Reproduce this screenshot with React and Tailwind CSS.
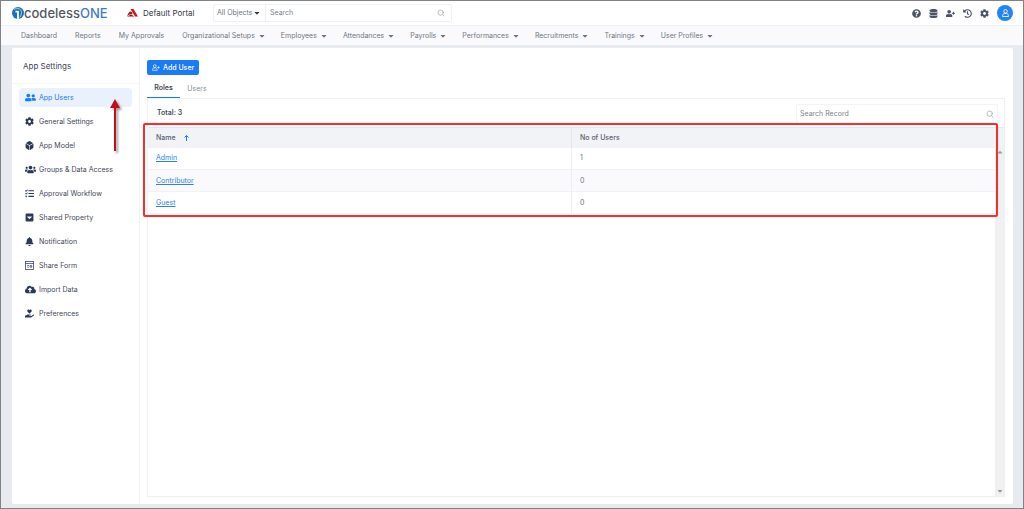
import {
  FaUserFriends, FaCog, FaDiceD6, FaUsers, FaTasks, FaCaretSquareDown, FaBell,
  FaCloudUploadAlt, FaHandHoldingHeart, FaQuestionCircle, FaDatabase, FaUserPlus,
  FaHistory, FaCaretDown, FaCaretUp,
} from 'react-icons/fa';
import { LuSearch } from 'react-icons/lu';

const navItems = [
  { label: 'Dashboard' },
  { label: 'Reports' },
  { label: 'My Approvals' },
  { label: 'Organizational Setups', menu: true },
  { label: 'Employees', menu: true },
  { label: 'Attendances', menu: true },
  { label: 'Payrolls', menu: true },
  { label: 'Performances', menu: true },
  { label: 'Recruitments', menu: true },
  { label: 'Trainings', menu: true },
  { label: 'User Profiles', menu: true },
];

const settings = [
  { label: 'App Users', icon: FaUserFriends, wide: true, active: true },
  { label: 'General Settings', icon: FaCog },
  { label: 'App Model', icon: FaDiceD6 },
  { label: 'Groups & Data Access', icon: FaUsers, wide: true },
  { label: 'Approval Workflow', icon: FaTasks },
  { label: 'Shared Property', icon: FaCaretSquareDown },
  { label: 'Notification', icon: FaBell },
  { label: 'Share Form', icon: FormIcon },
  { label: 'Import Data', icon: FaCloudUploadAlt, wide: true },
  { label: 'Preferences', icon: FaHandHoldingHeart },
];

const roles = [
  { name: 'Admin', users: 1 },
  { name: 'Contributor', users: 0 },
  { name: 'Guest', users: 0 },
];

const actions = [
  { label: 'Help', icon: FaQuestionCircle },
  { label: 'Data', icon: FaDatabase },
  { label: 'Invite user', icon: FaUserPlus },
  { label: 'History', icon: FaHistory },
  { label: 'Settings', icon: FaCog },
];

function FormIcon({ className }) {
  return (
    <svg viewBox="0 0 16 16" className={className} fill="none" stroke="currentColor" strokeWidth="1.3">
      <rect x="1" y="1" width="14" height="14" />
      <path d="M1 4.5h14M4 8h3M4 11h3M9 8h3v3H9z" />
    </svg>
  );
}

function PersonIcon({ className, plus }) {
  return (
    <svg viewBox={plus ? '0 0 20 16' : '0 0 14 16'} className={className} fill="none" stroke="currentColor" strokeWidth="1.7">
      <circle cx="7" cy="4.5" r="3.5" />
      <path d="M1 15c0-4 2-6 4-6h4c2 0 4 2 4 6z" />
      {plus && <path d="M16.500 5v6M13.500 8h6" />}
    </svg>
  );
}

function Logo() {
  return (
    <a href="#" className="flex items-center w-[95px] font-medium text-[13px] leading-4 whitespace-nowrap">
      <svg viewBox="0 0 24 24" className="w-3 h-3 shrink-0">
        <circle cx="12" cy="12" r="12" fill="#1a73b8" />
        <path d="M7 9h5v15" fill="none" stroke="#fff" strokeWidth="3.5" />
        <path d="M4 5c6-4 15-2 15 6 0 4-2 8-4 10" fill="none" stroke="#fff" strokeWidth="1.2" />
      </svg>
      <span className="text-[#54585f]">codeless<span className="text-[#3f78cf]">ONE</span></span>
    </a>
  );
}

function Header() {
  return (
    <header className="bg-white h-6 pl-[11px] pr-2.5 flex items-center shrink-0">
      <Logo />
      <div className="flex items-center gap-[5px] w-[106px] pl-5">
        <svg viewBox="0 0 22 16" className="w-[11px] h-2">
          <path d="M7 0h6l9 15h-6z" fill="#d0161b" />
          <path d="M6 5l4 1 1 4-6 1-5 3 3-6z" fill="#b01518" />
          <path d="M0 15l8-4 7 4z" fill="#8f1414" />
        </svg>
        <span className="text-[8px] text-[#343a40] whitespace-nowrap">Default Portal</span>
      </div>
      <form className="flex items-center w-[239px] h-[18px] border border-[#eff0f3] rounded-xs">
        <button type="button" className="flex items-center justify-between w-[52px] h-full pl-[3px] pr-1 border-r border-[#eff0f3] whitespace-nowrap">
          All Objects
          <FaCaretDown className="w-2 h-2 text-[#343a40]" />
        </button>
        <input aria-label="Search" placeholder="Search" className="flex-1 min-w-0 pl-1 outline-none placeholder:text-[#7d838d]" />
        <LuSearch className="w-2 h-2 mr-1.5 text-[#9aa0a8]" />
      </form>
      <div className="ml-auto flex items-center gap-2 text-[#4b5366]">
        {actions.map(({ label, icon: Icon }) => (
          <button key={label} aria-label={label}>
            <Icon className="w-[9px] h-[9px]" />
          </button>
        ))}
        <button aria-label="Account" className="w-4 h-4 rounded-full bg-[#2584f5] text-white flex items-center justify-center">
          <PersonIcon className="w-[7px] h-2" />
        </button>
      </div>
    </header>
  );
}

function NavBar() {
  return (
    <nav className="flex items-center h-5 px-5 bg-[#fafafc] border-t border-[#f0f1f4] shrink-0">
      {navItems.map((item) => (
        <a key={item.label} href="#" className={`flex items-center gap-1 whitespace-nowrap ${item.menu ? 'mr-4' : 'mr-[18px]'}`}>
          {item.label}
          {item.menu && <FaCaretDown className="w-1.5 h-2" />}
        </a>
      ))}
    </nav>
  );
}

function Sidebar() {
  return (
    <aside className="relative w-32 shrink-0 border-r border-[#f1f2f4] text-[#3f4757]">
      <h2 className="h-9 pl-[11px] flex items-center border-b border-[#f6f6f8] text-[8px]">App Settings</h2>
      <ul className="px-[7px] pt-1 flex flex-col gap-[5px]">
        {settings.map(({ label, icon: Icon, wide, active }) => (
          <li key={label}>
            <a
              href="#"
              className={`flex items-center gap-[3px] h-[19px] pl-1.5 rounded-sm ${active ? 'bg-[#e8f1fc] text-[#1b7af5]' : ''}`}
            >
              <span className={`w-[11px] flex ${active ? '' : 'text-[#2c3a57]'}`}>
                <Icon className={wide ? 'w-[11px] h-[11px]' : 'w-[9px] h-[9px]'} />
              </span>
              {label}
            </a>
          </li>
        ))}
      </ul>
      <svg viewBox="0 0 14 56" className="absolute left-24 top-[51px] w-3.5 h-14 drop-shadow-[2px_2px_1px_#00000066]">
        <path d="M7 0l5 9H8v43H6V9H2z" fill="#c40d18" />
      </svg>
    </aside>
  );
}

function RoleGrid() {
  return (
    <div className="relative flex-1 flex">
      <table className="flex-1 self-start table-fixed border-collapse text-left">
        <thead>
          <tr className="h-5 bg-[#f2f3f7] text-[#596070] border-t border-[#e3e5ea]">
            <th className="w-1/2 pl-2 font-medium border-r border-[#e4e6eb]">
              <span className="flex items-center gap-2">
                Name
                <svg viewBox="0 0 10 12" className="w-[5px] h-1.5" fill="none" stroke="#1b7af5" strokeWidth="2">
                  <path d="M5 12V1M1 5l4-4 4 4" />
                </svg>
              </span>
            </th>
            <th className="w-1/2 pl-2 font-medium">No of Users</th>
          </tr>
        </thead>
        <tbody>
          {roles.map((role) => (
            <tr key={role.name} className="h-[22px] bg-white even:bg-[#fafafc] border-b border-[#f1f2f5]">
              <td className="pl-2 border-r border-[#eceef1]">
                <a href="#" className="text-[#2d7ff0] underline">{role.name}</a>
              </td>
              <td className="pl-2">{role.users}</td>
            </tr>
          ))}
        </tbody>
      </table>
      <div className="flex flex-col">
        <div className="h-5 bg-[#f2f3f7] border-t border-[#e3e5ea]" />
        <div className="flex-1 w-[9px] bg-[#f0f0f0] flex flex-col items-center justify-between py-px text-[#9a9a9a]">
          <FaCaretUp className="w-1.5 h-2" />
          <FaCaretDown className="w-1.5 h-2" />
        </div>
      </div>
      <div className="absolute -left-[5px] right-1.5 -top-1 h-[94px] border-2 border-[#fb2c2c] rounded-xs pointer-events-none" />
    </div>
  );
}

function Content() {
  return (
    <main className="flex-1 min-w-0 flex flex-col pl-[7px] pr-2 pt-3 pb-[7px]">
      <button className="self-start flex items-center gap-[3px] h-[15px] px-[5px] rounded-xs bg-[#1b7af5] text-white font-medium">
        <PersonIcon plus className="w-2 h-[7px]" />
        Add User
      </button>
      <div role="tablist" className="flex mt-1 h-[19px]">
        <button role="tab" aria-selected="true" className="w-[33px] border-b border-[#1b7af5] font-semibold text-[#434b5b]">
          Roles
        </button>
        <button role="tab" aria-selected="false" className="w-[34px] text-[#8a9099]">
          Users
        </button>
      </div>
      <section className="flex-1 flex flex-col border border-[#eff0f3]">
        <div className="flex items-center justify-between h-7 pl-[9px] pr-1.5">
          <span className="font-semibold text-[#434b5b]">Total: 3</span>
          <label className="flex items-center w-[202px] h-5 mt-0.5 px-[3px] border border-[#f3f4f6] rounded-xs">
            <input aria-label="Search Record" placeholder="Search Record" className="flex-1 min-w-0 outline-none placeholder:text-[#7d838d]" />
            <LuSearch className="w-2 h-2 text-[#9aa0a8]" />
          </label>
        </div>
        <RoleGrid />
      </section>
    </main>
  );
}

export default function App() {
  return (
    <div className="min-h-screen flex flex-col bg-[#e7eaee] border border-[#808285] font-['Inter',sans-serif] text-[7px] leading-[10px] text-[#6f7682]">
      <Header />
      <NavBar />
      <div className="flex-1 flex ml-[11px] mr-2.5 mt-[3px] mb-1 bg-white rounded-xs">
        <Sidebar />
        <Content />
      </div>
    </div>
  );
}
